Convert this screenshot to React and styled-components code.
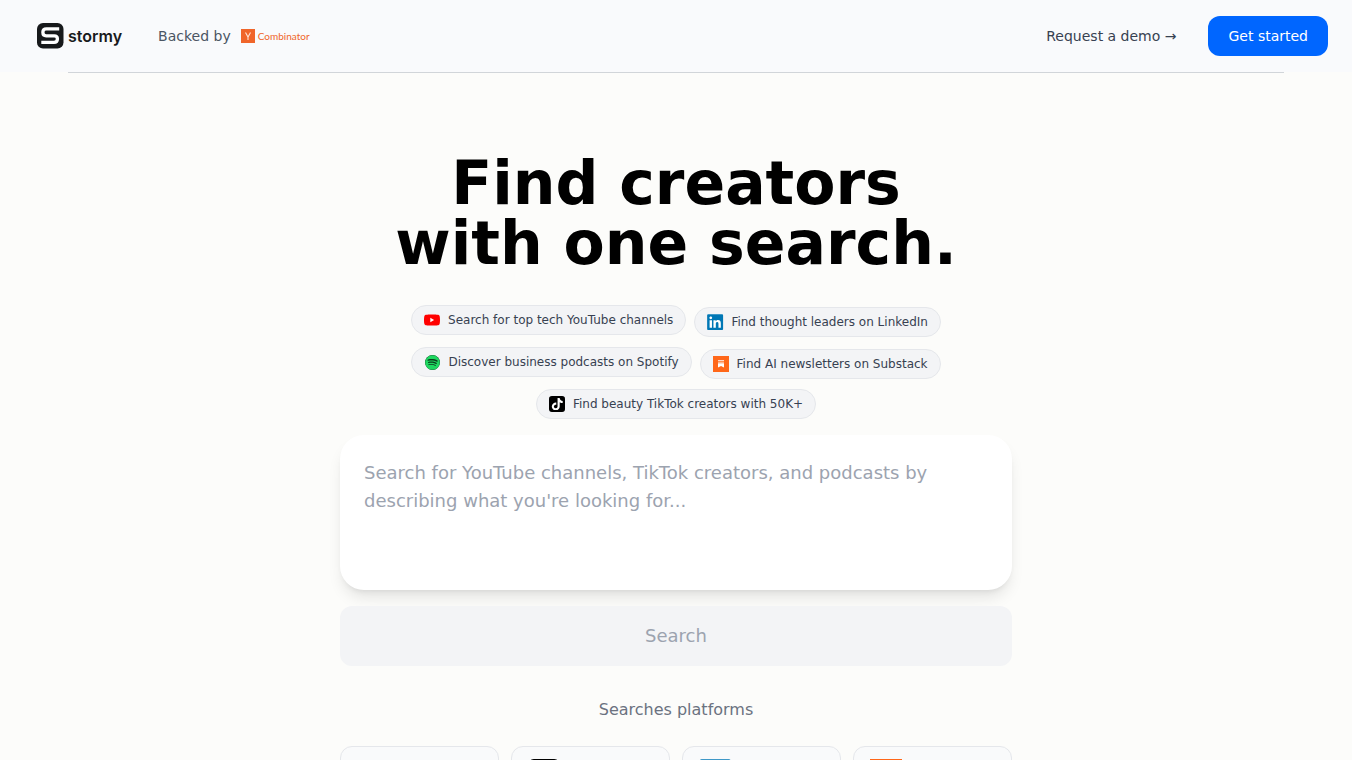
import React, { useState } from 'react';
import styled, { createGlobalStyle } from 'styled-components';
import { FaLinkedin, FaSpotify, FaTiktok } from 'react-icons/fa';

const GlobalStyle = createGlobalStyle`
  *, *::before, *::after {
    box-sizing: border-box;
  }
  body {
    margin: 0;
    background: #fcfcfa;
    color: #000000;
    font-family: 'DejaVu Sans', sans-serif;
  }
  button, textarea {
    font: inherit;
  }
`;

const TopBar = styled.header`
  background: #f9fafc;
`;

const TopBarInner = styled.div`
  display: flex;
  align-items: center;
  justify-content: space-between;
  height: 72px;
  padding: 0 24px 0 36px;
`;

const BarGroup = styled.div`
  display: flex;
  align-items: center;
  gap: ${({ $gap }) => $gap}px;
`;

const Rule = styled.hr`
  height: 1px;
  margin: 0 5%;
  border: 0;
  background: #d1d5d9;
`;

const Brand = styled.a`
  display: flex;
  align-items: center;
  gap: 4px;
  color: #191a1c;
  font-family: Inter, sans-serif;
  font-size: 16px;
  font-weight: 600;
  line-height: 24px;
  text-decoration: none;
`;

const Backer = styled.div`
  display: flex;
  align-items: center;
  gap: 10px;
  color: #4b5563;
  font-size: 14px;
  line-height: 20px;
`;

const BackerLogo = styled.span`
  display: flex;
  align-items: center;
  gap: 3px;
  color: #f0652a;
  font-family: Lato, sans-serif;
  font-size: 10px;
  line-height: 14px;
`;

const DemoLink = styled.a`
  color: #374151;
  font-size: 14px;
  line-height: 20px;
  text-decoration: none;
`;

const StartButton = styled.button`
  height: 40px;
  padding: 0 20px;
  border: 0;
  border-radius: 12px;
  background: #0066ff;
  color: #ffffff;
  font-size: 14px;
  cursor: pointer;
`;

const Main = styled.main`
  max-width: 704px;
  margin: 0 auto;
  padding: 80px 16px 48px;
`;

const Title = styled.h1`
  margin: 0 0 32px;
  font-size: 60px;
  font-weight: 700;
  line-height: 60px;
  text-align: center;
`;

const Suggestions = styled.div`
  display: flex;
  flex-wrap: wrap;
  align-items: flex-start;
  justify-content: center;
  gap: 10px 8px;
  margin-bottom: 16px;
`;

const Chip = styled.button`
  display: flex;
  align-items: center;
  gap: 8px;
  height: 30px;
  padding: 0 12px;
  border: 1px solid #e5e7eb;
  border-radius: 15px;
  background: #f3f4f6;
  color: #374151;
  font-size: 12px;
  line-height: 16px;
  white-space: nowrap;
  cursor: pointer;

  &:nth-child(even) {
    margin-top: 2px;
  }
`;

const Tile = styled.span`
  display: flex;
  flex: none;
  align-items: center;
  justify-content: center;
  width: ${({ $size }) => $size}px;
  height: ${({ $size }) => $size}px;
  border-radius: ${({ $radius }) => $radius || '0'};
  background: ${({ $color }) => $color || 'transparent'};
`;

const SearchForm = styled.form`
  display: flex;
  flex-direction: column;
  gap: 16px;
`;

const Prompt = styled.textarea`
  display: block;
  width: 100%;
  height: 155px;
  padding: 24px;
  border: 0;
  border-radius: 24px;
  outline: 0;
  background: #ffffff;
  box-shadow: 0 10px 15px -3px rgba(0, 0, 0, 0.1), 0 4px 6px -4px rgba(0, 0, 0, 0.1);
  font-size: 18px;
  line-height: 28px;
  resize: none;

  &::placeholder {
    color: #9ca3af;
  }
`;

const SearchButton = styled.button`
  padding: 16px 24px;
  border: 0;
  border-radius: 12px;
  background: #f3f4f6;
  color: #9ca3af;
  font-size: 18px;
  line-height: 28px;
`;

const PlatformsLabel = styled.p`
  margin: 32px 0 24px;
  color: #6b7280;
  font-size: 16px;
  line-height: 24px;
  text-align: center;
`;

const Platforms = styled.div`
  display: grid;
  grid-template-columns: repeat(4, 1fr);
  gap: 12px;
`;

const PlatformCard = styled.div`
  display: flex;
  padding: 12px 16px;
  border: 1px solid #e5e7eb;
  border-radius: 12px;
  background: #f9fafb;
`;

function StormyMark() {
  return (
    <svg width="28" height="28" viewBox="0 0 28 28" aria-hidden="true">
      <rect x="1" y="1" width="26.5" height="25.5" rx="6" fill="#17191b" />
      <path
        d="M23.2 6.9H10.4Q6.9 6.9 6.9 10V10.6Q6.9 13.8 10.2 13.8H18.2Q21.4 13.8 21.4 16.7V17Q21.4 20.4 18 20.4H5.3"
        fill="none"
        stroke="#ffffff"
        strokeWidth="3.3"
      />
    </svg>
  );
}

function YMark() {
  return (
    <svg width="14" height="14" viewBox="0 0 14 14" aria-hidden="true">
      <rect width="14" height="14" fill="#f0652a" />
      <path d="M4.5 3.5L7 8L9.5 3.5M7 8V11" fill="none" stroke="#ffe3d4" strokeWidth="1.1" />
    </svg>
  );
}

function YouTubeIcon({ size }) {
  return (
    <svg width={size} height={size} viewBox="0 0 24 24" aria-hidden="true">
      <path
        d="M23.5 6.2a3 3 0 0 0-2.1-2.1C19.5 3.6 12 3.6 12 3.6s-7.5 0-9.4.5A3 3 0 0 0 .5 6.2C0 8.1 0 12 0 12s0 3.9.5 5.8a3 3 0 0 0 2.1 2.1c1.9.5 9.4.5 9.4.5s7.5 0 9.4-.5a3 3 0 0 0 2.1-2.1c.5-1.9.5-5.8.5-5.8s0-3.9-.5-5.8z"
        fill="#ff0000"
      />
      <path d="M9.5 8.8v6.4l5.6-3.2z" fill="#ffffff" />
    </svg>
  );
}

function LinkedInIcon({ size }) {
  return (
    <Tile $size={size} $color="#ffffff" $radius="12%">
      <FaLinkedin size={size * 1.14} color="#0077b5" style={{ flex: 'none' }} />
    </Tile>
  );
}

function SpotifyIcon({ size }) {
  return (
    <Tile $size={size}>
      <Tile $size={size - 1} $color="#0b3d1d" $radius="50%">
        <FaSpotify size={size - 1} color="#1ed760" />
      </Tile>
    </Tile>
  );
}

function SubstackIcon({ size }) {
  return (
    <svg width={size} height={size} viewBox="0 0 16 16" aria-hidden="true">
      <rect width="16" height="16" fill="#ff6719" />
      <path d="M5 4.3h6v.8H5zM5 5.8h6v.8H5zM5 7.3h6v4.2L8 9.9l-3 1.6z" fill="#ffffff" />
    </svg>
  );
}

function TikTokIcon({ size }) {
  return (
    <Tile $size={size} $color="#000000" $radius="18%">
      <FaTiktok size={size * 0.78} color="#ffffff" />
    </Tile>
  );
}

const suggestions = [
  { text: 'Search for top tech YouTube channels', Icon: YouTubeIcon },
  { text: 'Find thought leaders on LinkedIn', Icon: LinkedInIcon },
  { text: 'Discover business podcasts on Spotify', Icon: SpotifyIcon },
  { text: 'Find AI newsletters on Substack', Icon: SubstackIcon },
  { text: 'Find beauty TikTok creators with 50K+', Icon: TikTokIcon },
];

const platforms = [
  { name: 'YouTube', Icon: YouTubeIcon },
  { name: 'TikTok', Icon: TikTokIcon },
  { name: 'LinkedIn', Icon: LinkedInIcon },
  { name: 'Substack', Icon: SubstackIcon },
];

export default function App() {
  const [query, setQuery] = useState('');

  return (
    <>
      <GlobalStyle />
      <TopBar>
        <TopBarInner>
          <BarGroup $gap={36}>
            <Brand href="#">
              <StormyMark />
              stormy
            </Brand>
            <Backer>
              Backed by
              <BackerLogo>
                <YMark />
                Combinator
              </BackerLogo>
            </Backer>
          </BarGroup>
          <BarGroup $gap={32}>
            <DemoLink href="#demo">Request a demo →</DemoLink>
            <StartButton type="button">Get started</StartButton>
          </BarGroup>
        </TopBarInner>
      </TopBar>
      <Rule />
      <Main>
        <Title>
          Find creators
          <br />
          with one search.
        </Title>
        <Suggestions>
          {suggestions.map(({ text, Icon }) => (
            <Chip key={text} type="button" onClick={() => setQuery(text)}>
              <Icon size={16} />
              {text}
            </Chip>
          ))}
        </Suggestions>
        <SearchForm onSubmit={(e) => e.preventDefault()}>
          <Prompt
            aria-label="Search"
            value={query}
            onChange={(e) => setQuery(e.target.value)}
            placeholder="Search for YouTube channels, TikTok creators, and podcasts by describing what you're looking for..."
          />
          <SearchButton type="submit" disabled={!query}>
            Search
          </SearchButton>
        </SearchForm>
        <PlatformsLabel>Searches platforms</PlatformsLabel>
        <Platforms>
          {platforms.map(({ name, Icon }) => (
            <PlatformCard key={name} role="img" aria-label={name}>
              <Icon size={32} />
            </PlatformCard>
          ))}
        </Platforms>
      </Main>
    </>
  );
}
